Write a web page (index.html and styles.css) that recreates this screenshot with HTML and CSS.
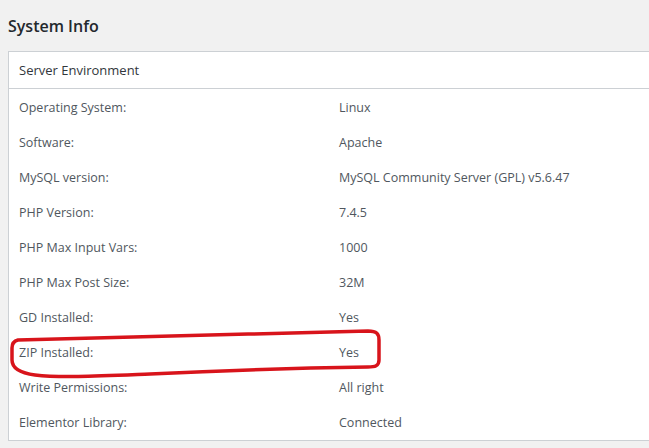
FILE: index.html
```html
<!DOCTYPE html>
<html>
<head>
    <title>System Info</title>
    <link rel="stylesheet" href="styles.css">
</head>
<body>
    <div class="wrap">
        <h2 class="page-title">System Info</h2>
        <div class="report-box">
            <div class="report-heading">Server Environment</div>
            <div class="report-rows">
                <div class="report-row"><span>Operating System:</span><span>Linux</span></div>
                <div class="report-row"><span>Software:</span><span>Apache</span></div>
                <div class="report-row"><span>MySQL version:</span><span>MySQL Community Server (GPL) v5.6.47</span></div>
                <div class="report-row"><span>PHP Version:</span><span>7.4.5</span></div>
                <div class="report-row"><span>PHP Max Input Vars:</span><span>1000</span></div>
                <div class="report-row"><span>PHP Max Post Size:</span><span>32M</span></div>
                <div class="report-row"><span>GD Installed:</span><span>Yes</span></div>
                <div class="report-row"><span>ZIP Installed:</span><span>Yes</span></div>
                <div class="report-row"><span>Write Permissions:</span><span>All right</span></div>
                <div class="report-row"><span>Elementor Library:</span><span>Connected</span></div>
            </div>
        </div>
    </div>
    <!-- hand-drawn marker around the ZIP row -->
    <svg class="marker" width="649" height="448" viewBox="0 0 649 448">
        <path d="M18 340 C100 338 250 334 368 331 C377 331 379 334 379 340 L379 360 C379 366 375 367 368 367 C300 368 230 370 150 374 C100 376 60 378 35 375 C20 373 12 368 12 360 L12 348 C12 343 14 341 18 340 Z"
              fill="none" stroke="#d8141b" stroke-width="3.5" stroke-linejoin="round"/>
    </svg>
</body>
</html>
```

FILE: styles.css
```css
html, body {
    margin: 0;
    height: 100%;
    overflow: hidden;
}
body {
    background: #f1f1f1;
    font-family: "Open Sans", "Noto Sans", sans-serif;
    font-size: 12.5px;
    color: #50575e;
}
.wrap {
    padding-left: 8px;
}
.page-title {
    margin: 0;
    padding: 14px 0 13px;
    font-size: 16px;
    font-weight: 600;
    line-height: 24px;
    color: #23282d;
}
.report-box {
    background: #fff;
    border: 1px solid #ccd0d4;
    border-right: none;
}
.report-heading {
    padding: 9px 10px;
    line-height: 18px;
    font-size: 13px;
    color: #32373c;
    border-bottom: 1px solid #ccd0d4;
}
.report-rows {
    padding-top: 1px;
}
.report-row {
    display: grid;
    grid-template-columns: 320px 1fr;
    align-items: center;
    height: 35px;
    padding-left: 10px;
    white-space: nowrap;
}
.marker {
    position: absolute;
    left: 0;
    top: 0;
    pointer-events: none;
}
```
